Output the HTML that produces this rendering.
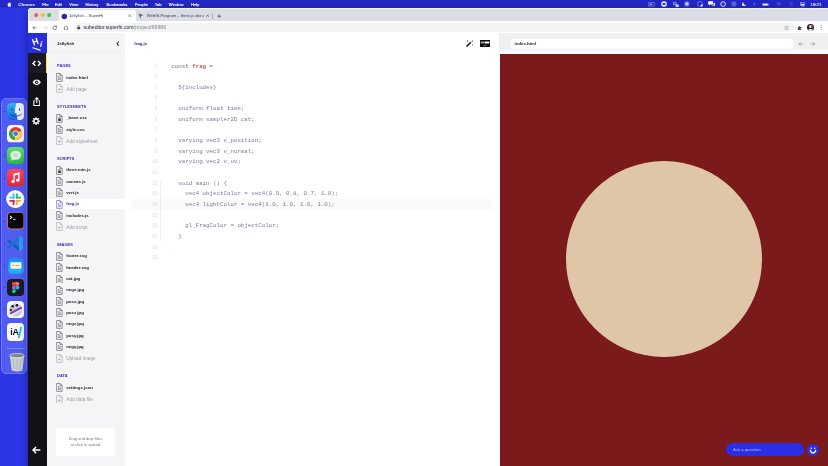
<!DOCTYPE html>
<html lang="en">
<head>
<meta charset="utf-8">
<title>Jellyfish – SuperHi</title>
<style>
*{box-sizing:border-box;margin:0;padding:0}
html,body{width:828px;height:466px;overflow:hidden;background:#2c36e6}
body{position:relative;font-family:"Liberation Sans",sans-serif;color:#111;-webkit-font-smoothing:antialiased}
#root{position:absolute;left:0;top:0;width:828px;height:466px;will-change:transform;overflow:hidden}
.abs{position:absolute}
.t{position:absolute;white-space:nowrap;line-height:1;transform:translateY(-50%)}

/* ---------- macOS menu bar ---------- */
#menubar{position:absolute;left:0;top:0;width:828px;height:7.400px;background:#2328c6;box-shadow:0 0 1px #15157a}
#menubar .m{position:absolute;top:4.600px;transform:translateY(-50%);color:#fff;font-size:4.150px;line-height:1;white-space:nowrap;-webkit-text-stroke:.14px #fff}
#menubar .ic{position:absolute;top:1.6px;height:4.8px;opacity:.95}

/* ---------- dock ---------- */
#dock{position:absolute;left:1px;top:98.400px;width:26px;height:276px;border-radius:5px;background:#505df0;border:.5px solid #6f7af4}
.di{position:absolute;left:4.900px;width:17.300px;height:17.300px;border-radius:4px;overflow:hidden;margin-top:-.65px}
.dot{position:absolute;left:1.600px;width:1px;height:1px;border-radius:50%;background:#1a1f8a}

/* ---------- chrome window ---------- */
#win{position:absolute;left:28px;top:7.800px;width:800px;height:458.200px;background:#fff;border-top-left-radius:3.500px;overflow:hidden;box-shadow:0 2px 9px rgba(0,0,20,.42)}
#tabstrip{position:absolute;left:0;top:0;width:800px;height:13.600px;background:linear-gradient(#e6e8ee 0,#dadde5 1.200px,#dadde5 12.600px,#d4d7de 13.600px)}
#tab1{position:absolute;left:30.500px;top:1.800px;width:77.500px;height:11.800px;background:#fff;border-radius:2.6px 2.6px 0 0}
#toolbar{position:absolute;left:0;top:13.600px;width:800px;height:11.900px;background:#fff}
#omni{position:absolute;left:46px;top:1.500px;width:720px;height:9.300px;border-radius:4.600px;background:#f1f3f4}
.tabt{font-size:4.1px;color:#3c4043}

/* ---------- app ---------- */
#app{position:absolute;left:0;top:25.700px;width:800px;height:432.500px;background:#fff}
#rail{position:absolute;left:0;top:0;width:19px;height:432.5px;background:#121216}
#logo{position:absolute;left:0;top:0;width:19px;height:20px;background:#272ddd}
#railact{position:absolute;left:0;top:20px;width:19px;height:19.300px;background:#1a1a23}
#railact:after{content:"";position:absolute;right:0;top:0;width:1.2px;height:100%;background:#ffe24a}
#panel{position:absolute;left:19px;top:0;width:77.5px;height:432.5px;background:#f5f5f8}
#panelhead{position:absolute;left:0;top:0;width:77.5px;height:20px;border-bottom:.5px solid #efeff3}
.sec{position:absolute;left:9.800px;margin-top:.5px;font-size:4.200px;font-weight:bold;letter-spacing:.1px;color:#352ca6;line-height:1;transform:translateY(-50%) scaleX(.93);transform-origin:0 50%;white-space:nowrap}
.row{position:absolute;left:0;width:77.5px;height:11.33px}
.row svg{position:absolute;left:9.200px;top:1.2px;width:6.8px;height:8.9px}
.row span{position:absolute;left:19.200px;top:50%;margin-top:.2px;transform:translateY(-50%);font-size:4.350px;font-weight:bold;color:#1d1d26;line-height:1;white-space:nowrap}
.row.add span{font-weight:normal;color:#9a9aa6;font-size:4.800px;margin-top:1px}
.row.add svg{opacity:.5}
.row.sel{background:#fff;width:82px;height:9.700px;margin-top:.8px}
.row.sel svg{top:.4px}
.row.sel svg path{stroke:#3b31b4}
.row.sel span{color:#3b31b4}
#drop{position:absolute;left:9.100px;top:394.200px;width:58.500px;height:28.100px;background:#fff;border-radius:1px;text-align:center;font-size:3.800px;line-height:5.800px;color:#73737f;padding-top:9.300px;letter-spacing:.05px}

#editor{position:absolute;left:96.5px;top:0;width:375.5px;height:432.5px;background:#fff}
#code{position:absolute;left:0;top:27.800px;width:375px;font-family:"Liberation Mono",monospace;font-size:5.805px;line-height:10.667px;color:#7a7a9f;white-space:pre}
#code .ln{position:absolute;left:0;width:33px;text-align:right;color:#d9d9e1;font-size:4.700px}
#code .l{position:absolute;left:46.8px;height:10.667px}
#code .act{position:absolute;left:6.500px;width:360.900px;height:10.700px;background:#fafafb;margin-top:-1.050px}
.kw{color:#6c6c74}
.def{color:#c4544d;font-weight:bold}

#preview{position:absolute;left:472px;top:0;width:328px;height:432.5px;background:#7b1a1b}
#pvhead{position:absolute;left:-.6px;top:0;width:328.600px;height:20.200px;background:linear-gradient(#f0f0f2 0,#f0f0f2 15.800px,#fafafb 18.200px,#fff 20.200px)}
#pvurl{position:absolute;left:10.900px;top:5.900px;width:283.800px;height:9.200px;border-radius:4.600px;background:#fff}
#sun{position:absolute;left:66.200px;top:128px;width:195.700px;height:195.700px;border-radius:50%;background:#dfc6a8}
#ask{position:absolute;left:226.3px;top:409.8px;width:77.5px;height:12.9px;border-radius:6.5px;background:#2a2fe6}
#smile{position:absolute;left:306.6px;top:410.3px;width:12px;height:12px;border-radius:50%;background:#2a2fe6}
</style>
</head>
<body>
<div id="root">

<!-- macOS menu bar -->
<div id="menubar">
  <svg class="abs" style="left:6.800px;top:1.500px;width:4.500px;height:5.300px" viewBox="0 0 44 52"><path fill="#fff" d="M31 0c.3 3-1 6-2.700 8-1.800 2-4.600 3.600-7.300 3.400-.4-2.900 1-5.900 2.700-7.700C25.500 1.600 28.600.1 31 0zM40 18c-1 .6-5 3-5 8.500 0 6.400 5.600 8.600 5.800 8.700 0 .2-.9 3-3 6-1.800 2.600-3.700 5.200-6.600 5.200s-3.600-1.700-6.900-1.700c-3.200 0-4.400 1.800-7 1.800s-4.500-2.400-6.600-5.400C8 37.400 6 31.700 6 26.300c0-8.700 5.600-13.300 11.200-13.300 2.900 0 5.400 2 7.200 2s4.500-2.100 7.900-2.100c1.300 0 5.900.1 8.900 4.400z"/></svg>
  <span class="m" style="left:18.300px;font-weight:bold;font-size:4.400px;-webkit-text-stroke:0">Chrome</span>
  <span class="m" style="left:41.9px">File</span>
  <span class="m" style="left:54.8px">Edit</span>
  <span class="m" style="left:69.3px">View</span>
  <span class="m" style="left:85.5px">History</span>
  <span class="m" style="left:106.6px">Bookmarks</span>
  <span class="m" style="left:134.8px">People</span>
  <span class="m" style="left:154.8px">Tab</span>
  <span class="m" style="left:168.8px">Window</span>
  <span class="m" style="left:190.9px">Help</span>
  <span class="m" style="left:810.600px;font-weight:normal;font-size:4.300px;opacity:.95">19:21</span>
  <!-- status icons -->
  <svg class="abs" style="left:648px;top:1.800px;width:7px;height:4.800px" viewBox="0 0 28 19"><rect x="1.500" y="2.500" width="25" height="14" rx="2" fill="none" stroke="#aab0f2" stroke-width="2.200"/><rect x="7" y="6.500" width="9" height="6" fill="#aab0f2"/></svg>
  <svg class="abs" style="left:660.600px;top:1.200px;width:6px;height:6px" viewBox="0 0 20 20"><circle cx="10" cy="10" r="9.500" fill="#eef0ff"/><rect x="5.500" y="7" width="9" height="6" rx="1" fill="#2a2fb4"/></svg>
  <svg class="abs" style="left:673px;top:1.600px;width:6px;height:5.400px" viewBox="0 0 20 18"><rect x="1" y="1" width="9" height="8" rx="1" fill="none" stroke="#e8eaff" stroke-width="2.200"/><rect x="9" y="8" width="10" height="9" rx="1" fill="#e8eaff"/></svg>
  <svg class="abs" style="left:684.400px;top:1.300px;width:5.800px;height:5.800px" viewBox="0 0 20 20"><circle cx="10" cy="10" r="9" fill="#8088e8"/><circle cx="10" cy="10" r="4" fill="#e8eaff"/></svg>
  <svg class="abs" style="left:696.600px;top:1.200px;width:6.400px;height:6.200px" viewBox="0 0 22 21"><circle cx="10" cy="10" r="8.500" fill="none" stroke="#8d95ee" stroke-width="2.600"/><circle cx="16.500" cy="15.500" r="4" fill="#fff"/></svg>
  <svg class="abs" style="left:708.400px;top:1.400px;width:7.200px;height:5.800px" viewBox="0 0 25 20"><path d="M2 1h14a1.500 1.500 0 0 1 1.500 1.500V11a1.500 1.500 0 0 1-1.500 1.500H8L4 16v-3.500H2A1.500 1.500 0 0 1 .5 11V2.500A1.500 1.500 0 0 1 2 1z" fill="#fff"/><path d="M19.500 6H23a1.500 1.500 0 0 1 1.500 1.500v7A1.500 1.500 0 0 1 23 16h-1v3l-4-3h-6v-2h7.500z" fill="#fff"/></svg>
  <svg class="abs" style="left:720.200px;top:1.100px;width:6.200px;height:6.200px" viewBox="0 0 20 20"><circle cx="10" cy="10" r="7.500" fill="none" stroke="#fff" stroke-width="3"/></svg>
  <svg class="abs" style="left:730.800px;top:1.300px;width:5.800px;height:5.800px" viewBox="0 0 20 20"><circle cx="10" cy="10" r="9" fill="#5a62dc"/></svg>
  <svg class="abs" style="left:742.400px;top:2px;width:4.200px;height:4.400px" viewBox="0 0 20 20"><path d="M8 1a9.500 9.500 0 1 0 11 11A8 8 0 0 1 8 1z" fill="#fff"/></svg>
  <svg class="abs" style="left:753.200px;top:1.800px;width:2.600px;height:4.800px" viewBox="0 0 10 20"><path d="M1.500 5.500l7 9L5 18V2l3.500 3.500-7 9" fill="none" stroke="#7078e4" stroke-width="1.800"/></svg>
  <svg class="abs" style="left:762.400px;top:2.600px;width:7.400px;height:3.400px" viewBox="0 0 42 20"><rect x="1.500" y="1.500" width="35" height="17" rx="4.500" fill="none" stroke="#c5c9fa" stroke-width="2.400"/><rect x="5" y="5" width="28" height="10" rx="2" fill="#fff"/><rect x="38.500" y="6.500" width="3" height="7" rx="1.500" fill="#c5c9fa"/></svg>
  <svg class="abs" style="left:776.400px;top:2.200px;width:5.600px;height:4.200px" viewBox="0 0 24 18"><path d="M1 6a16 16 0 0 1 22 0l-2.400 2.600a12.500 12.500 0 0 0-17.200 0zM5.500 10.700a9.500 9.500 0 0 1 13 0L16 13.400a6 6 0 0 0-8 0zM9.700 15.200a3.400 3.400 0 0 1 4.600 0L12 17.800z" fill="#5f68e2"/></svg>
  <svg class="abs" style="left:788.700px;top:1.900px;width:4.800px;height:4.800px" viewBox="0 0 20 20"><circle cx="10" cy="10" r="8" fill="none" stroke="#5f68e2" stroke-width="2"/><path d="M10 5v5.500l3.500 2" fill="none" stroke="#5f68e2" stroke-width="2"/></svg>
  <svg class="abs" style="left:799.600px;top:2px;width:5.400px;height:4.500px" viewBox="0 0 24 20"><rect x="1.500" y="1.500" width="21" height="15" rx="2" fill="none" stroke="#e8eaff" stroke-width="2.400"/><rect x="4" y="8" width="16" height="6.500" fill="#e8eaff"/><rect x="8" y="17.500" width="8" height="2" fill="#e8eaff"/></svg>
</div>

<!-- dock -->
<div id="dock">
  <i class="dot" style="top:11.400px"></i><i class="dot" style="top:34px"></i><i class="dot" style="top:56px"></i><i class="dot" style="top:78.500px"></i><i class="dot" style="top:100px"></i><i class="dot" style="top:122px"></i><i class="dot" style="top:144px"></i><i class="dot" style="top:166px"></i><i class="dot" style="top:188px"></i><i class="dot" style="top:210px"></i><i class="dot" style="top:232px"></i>
  <!-- Finder -->
  <svg class="di" style="top:4.200px" viewBox="0 0 40 40"><defs><linearGradient id="fb" x1="0" y1="0" x2="0" y2="1"><stop offset="0" stop-color="#35b4f8"/><stop offset="1" stop-color="#1762dd"/></linearGradient></defs><rect width="40" height="40" rx="9" fill="url(#fb)"/><path d="M22 0h9a9 9 0 0 1 9 9v22a9 9 0 0 1-9 9h-6c-2-6-3-11-3-17h-4c0-9 2-17 4-23z" fill="#eaeef6"/><path d="M11 13v4M29 13v4" stroke="#14285a" stroke-width="2" stroke-linecap="round"/><path d="M8 26c7 6 18 6 25 0" stroke="#14285a" stroke-width="1.800" fill="none" stroke-linecap="round"/></svg>
  <!-- Chrome -->
  <svg class="di" style="top:26.500px" viewBox="0 0 40 40"><rect width="40" height="40" rx="9" fill="#f6f6f6"/><circle cx="20" cy="20" r="15" fill="#e33b2e"/><path d="M20 20L7 12.500A15 15 0 0 0 17.500 34.800z" fill="#2da94f"/><path d="M20 20l-2.500 14.800A15 15 0 0 0 33 12.500z" fill="#fdd03b"/><path d="M20 12.500h13A15 15 0 0 0 7 12.500z" fill="#e33b2e"/><circle cx="20" cy="20" r="7" fill="#f6f6f6"/><circle cx="20" cy="20" r="5.500" fill="#3f7fe8"/></svg>
  <!-- Messages -->
  <svg class="di" style="top:48.400px" viewBox="0 0 40 40"><defs><linearGradient id="mg" x1="0" y1="0" x2="0" y2="1"><stop offset="0" stop-color="#5fe36f"/><stop offset="1" stop-color="#22b845"/></linearGradient></defs><rect width="40" height="40" rx="9" fill="url(#mg)"/><ellipse cx="20" cy="19" rx="12.500" ry="10.500" fill="#dff3e0"/><path d="M11 26l-2 6 7-3z" fill="#dff3e0"/><ellipse cx="20" cy="19" rx="6" ry="5" fill="#c4cfc6" opacity=".7"/></svg>
  <!-- Music -->
  <svg class="di" style="top:70.600px" viewBox="0 0 40 40"><defs><linearGradient id="mu" x1="0" y1="0" x2="0" y2="1"><stop offset="0" stop-color="#fb4a63"/><stop offset="1" stop-color="#e3223c"/></linearGradient></defs><rect width="40" height="40" rx="9" fill="url(#mu)"/><path d="M15 11l14-3.500v18.500a4 3.500 0 1 1-3-3.400V13l-8 2v14a4 3.500 0 1 1-3-3.400z" fill="#fff"/></svg>
  <!-- Slack -->
  <svg class="di" style="top:91.200px;left:4.400px;width:18.400px;height:18.400px;border-radius:50%" viewBox="0 0 40 40"><circle cx="20" cy="20" r="20" fill="#fbfbfd"/><g stroke-width="4" stroke-linecap="round"><path d="M16.500 9v8" stroke="#36c5f0"/><path d="M9 16.500h8" stroke="#36c5f0"/><path d="M23.500 9v8" stroke="#2eb67d"/><path d="M23 16.500h8" stroke="#2eb67d"/><path d="M16.500 23v8" stroke="#e01e5a"/><path d="M9 23.500h8" stroke="#e01e5a"/><path d="M23.500 23v8" stroke="#ecb22e"/><path d="M23 23.500h8" stroke="#ecb22e"/></g></svg>
  <!-- Terminal -->
  <svg class="di" style="top:113.600px" viewBox="0 0 40 40"><rect x=".8" y=".8" width="38.400" height="38.400" rx="8" fill="#0b0709" stroke="#d86a9c" stroke-width="2.400"/><path d="M7 9l4 3.500L7 16" stroke="#fff" stroke-width="2.400" fill="none"/><path d="M14 17h6" stroke="#ddd" stroke-width="2"/></svg>
  <!-- VS Code -->
  <svg class="di" style="top:135.900px;left:3.700px;width:18.200px;height:17.600px;border-radius:0;overflow:visible" viewBox="0 0 40 40"><path d="M1.500 13.500L5.500 9.500 31 29l-1 9z" fill="#1462b4"/><path d="M1.500 26.500L5.500 30.500 31 11l-1-9z" fill="#1a74cc"/><path d="M29 2l9 4.500v27L29 38z" fill="#2a9df0"/></svg>
  <!-- Mimestream / mail -->
  <svg class="di" style="top:159px;left:6px;width:15.800px;height:15.800px" viewBox="0 0 40 40"><defs><linearGradient id="ml" x1="0" y1="0" x2="0" y2="1"><stop offset="0" stop-color="#1a8cf0"/><stop offset="1" stop-color="#19b2f6"/></linearGradient></defs><rect width="40" height="40" rx="9" fill="url(#ml)"/><rect x="6" y="11" width="28" height="16" rx="1.500" fill="#f8f6ef"/><path d="M11 19h6M20 19h9" stroke="#e8a23c" stroke-width="3"/><path d="M6 31h28" stroke="#57c6fa" stroke-width="1.500"/></svg>
  <!-- Figma -->
  <svg class="di" style="top:179.800px" viewBox="0 0 40 40"><rect width="40" height="40" rx="9" fill="#1b1b29"/><path d="M20 7h-4.300a4.300 4.300 0 0 0 0 8.600H20z" fill="#f24e1e"/><path d="M20 7h4.300a4.300 4.300 0 0 1 0 8.600H20z" fill="#ff7262"/><path d="M20 15.600h-4.300a4.300 4.300 0 0 0 0 8.600H20z" fill="#a259ff"/><circle cx="24.300" cy="19.900" r="4.300" fill="#1abcfe"/><path d="M20 24.200h-4.300a4.300 4.300 0 1 0 4.300 4.300z" fill="#0acf83"/></svg>
  <!-- palette app -->
  <svg class="di" style="top:202.300px" viewBox="0 0 40 40"><rect width="40" height="40" rx="9" fill="#fafafc"/><circle cx="20" cy="21" r="15" fill="#c9c6cf"/><path d="M6 27L33 13l2 5L9 32z" fill="#7b3fb6"/><path d="M8 31l26-13 1 4L11 35z" fill="#e8e4ee"/><circle cx="13" cy="12" r="3" fill="#17171c"/><circle cx="23" cy="10" r="3" fill="#17171c"/><circle cx="9" cy="21" r="2.500" fill="#17171c"/></svg>
  <!-- iA Writer -->
  <div class="di" style="top:224.500px;background:#fbfbfd"><span class="abs" style="left:3.300px;top:4.600px;font-size:9px;line-height:1;font-weight:bold;color:#111;letter-spacing:-.3px">iA</span><i class="abs" style="left:12.600px;top:3.500px;width:1.500px;height:10.500px;background:#22c7e8;transform:skewX(-12deg)"></i></div>
  <i class="abs" style="left:4.600px;top:248.200px;width:18.400px;height:.5px;background:#7b86f4"></i>
  <!-- Trash -->
  <svg class="di" style="top:254.600px;left:6.600px;width:16px;height:18.600px;border-radius:0" viewBox="0 0 32 37"><ellipse cx="16" cy="5" rx="14.500" ry="4.500" fill="#7d8a86"/><path d="M1.500 5L5 33.500c.5 2 5 3.300 11 3.300s10.500-1.300 11-3.300L30.500 5c-2 2.500-8 3.800-14.500 3.800S3.500 7.500 1.500 5z" fill="#c9cdd4"/><path d="M9 12l1.500 20M16 12.500v20.500M23 12l-1.500 20" stroke="#b0b4bd" stroke-width="1.600"/><ellipse cx="16" cy="5" rx="14.500" ry="4.500" fill="none" stroke="#e4e7ee" stroke-width="1.400"/></svg>
</div>

<!-- chrome window -->
<div id="win">
  <div id="tabstrip">
    <svg class="abs" style="left:4px;top:3px;width:22px;height:8px" viewBox="0 0 22 8"><circle cx="4.200" cy="4.100" r="2.050" fill="#ee5f57"/><circle cx="10.700" cy="4.100" r="2.050" fill="#f5bd2f"/><circle cx="17.200" cy="4.100" r="2.050" fill="#3ec544"/></svg>
    <div id="tab1">
      <svg class="abs" style="left:2px;top:3px;width:7px;height:7px" viewBox="0 0 7 7"><circle cx="3.300" cy="3.400" r="2.750" fill="#2d2aa5"/></svg>
      <span class="t tabt" style="left:10.8px;top:6.5px">Jellyfish – SuperHi</span>
      <svg class="abs" style="left:69.6px;top:4.7px;width:3.4px;height:3.4px" viewBox="0 0 10 10"><path d="M1.500 1.500l7 7M8.500 1.500l-7 7" stroke="#45484d" stroke-width="1.600" fill="none"/></svg>
    </div>
    <svg class="abs" style="left:109.600px;top:5.200px;width:5.800px;height:5.800px" viewBox="0 0 20 20"><path d="M1 2l18 5-9 3.500L8.500 19z" fill="#4a4d52"/><path d="M1 2l9 8.500" stroke="#dee1e6" stroke-width="1.200"/></svg>
    <span class="t tabt" style="left:118.700px;top:8.300px">WebGLProgram – three.js docs</span>
    <svg class="abs" style="left:177.500px;top:6.500px;width:3.400px;height:3.400px" viewBox="0 0 10 10"><path d="M1.500 1.500l7 7M8.500 1.500l-7 7" stroke="#45484d" stroke-width="1.600" fill="none"/></svg>
    <i class="abs" style="left:184.400px;top:5.200px;width:.5px;height:6px;background:#aeb2b8"></i>
    <svg class="abs" style="left:189.400px;top:5.800px;width:4.400px;height:4.400px" viewBox="0 0 10 10"><path d="M5 .8v8.400M.8 5h8.400" stroke="#3c4043" stroke-width="1.500" fill="none"/></svg>
  </div>
  <i class="abs" style="left:0;top:0;width:1.100px;height:14px;background:linear-gradient(#fff,rgba(255,255,255,.8));opacity:.85;border-top-left-radius:3px"></i><i class="abs" style="left:0;top:0;width:800px;height:.9px;background:#f3f4f8;opacity:.9"></i>
  <div id="toolbar">
    <svg class="abs" style="left:3.600px;top:3.400px;width:5.400px;height:5.400px" viewBox="0 0 20 20"><path d="M17 10H4M9.500 4L3.500 10l6 6" stroke="#45484d" stroke-width="2.300" fill="none"/></svg>
    <svg class="abs" style="left:14.600px;top:3.400px;width:5.400px;height:5.400px" viewBox="0 0 20 20"><path d="M3 10h13M10.500 4l6 6-6 6" stroke="#c6c9ce" stroke-width="2.300" fill="none"/></svg>
    <svg class="abs" style="left:24.300px;top:3.300px;width:5.600px;height:5.600px" viewBox="0 0 20 20"><path d="M16.500 10a6.500 6.500 0 1 1-2-4.700" stroke="#45484d" stroke-width="2.300" fill="none"/><path d="M17.500 1.500v6.500h-6.500z" fill="#45484d"/></svg>
    <svg class="abs" style="left:34.700px;top:3.200px;width:5.800px;height:5.800px" viewBox="0 0 20 20"><path d="M3 9.500L10 3l7 6.500M5 8.500V17h10V8.500" stroke="#45484d" stroke-width="2.200" fill="none"/></svg>
    <div id="omni">
      <svg class="abs" style="left:3.400px;top:2.200px;width:3.400px;height:4.600px" viewBox="0 0 12 16"><rect x="1" y="7" width="10" height="8" rx="1.500" fill="#45484d"/><path d="M3.300 7V4.500a2.700 2.700 0 0 1 5.400 0V7" stroke="#45484d" stroke-width="1.700" fill="none"/></svg>
      <span class="t" style="left:9.600px;top:5.400px;font-size:5.120px;color:#202124">subeditor.superhi.com<span style="color:#80868b">/project/69986</span></span>
      <svg class="abs" style="left:710.400px;top:2px;width:5.200px;height:5.200px" viewBox="0 0 20 20"><path d="M10 2l2.500 5.300 5.700.7-4.200 4 1.100 5.700L10 14.900 4.900 17.700 6 12 1.800 8l5.700-.7z" stroke="#80848a" stroke-width="1.700" fill="none"/></svg>
    </div>
    <svg class="abs" style="left:768.600px;top:3.300px;width:5.600px;height:5.600px" viewBox="0 0 20 20"><path d="M3 7h4V5.500a2 2 0 1 1 4 0V7h5v4h-1.500a2 2 0 1 0 0 4H16v3H3z" fill="#45484d"/></svg>
    <div class="abs" style="left:779.200px;top:2.500px;width:6.800px;height:6.800px;border-radius:50%;background:#2a2630;overflow:hidden"><i class="abs" style="left:2.100px;top:1.500px;width:2.800px;height:3px;border-radius:50%;background:#e9c9c0"></i><i class="abs" style="left:3.600px;top:.6px;width:3px;height:3.400px;border-radius:50%;background:#a33b55;opacity:.8"></i><i class="abs" style="left:1.200px;top:4.700px;width:4.600px;height:3px;border-radius:50%;background:#f1f1f1"></i></div>
    <svg class="abs" style="left:791.600px;top:3px;width:2.400px;height:6.400px" viewBox="0 0 6 16"><circle cx="3" cy="3" r="1.350" fill="#5f6368"/><circle cx="3" cy="8" r="1.350" fill="#5f6368"/><circle cx="3" cy="13" r="1.350" fill="#5f6368"/></svg>
  </div>

  <div id="app">
    <div id="rail">
      <div id="logo">
        <span class="abs" style="left:4px;top:3.800px;font-size:9.400px;line-height:1;font-weight:bold;color:#fff;transform:rotate(-20deg) scaleX(.92)">H</span>
        <span class="abs" style="left:12.200px;top:6.400px;font-size:8.400px;line-height:1;font-weight:bold;color:#fff;transform:rotate(12deg)">i</span>
        <svg class="abs" style="left:3.600px;top:13.600px;width:9.600px;height:4px" viewBox="0 0 20 8"><path d="M1.500 1.500L17 6.300" stroke="#fff" stroke-width="2.300" stroke-linecap="round"/></svg>
      </div>
      <div id="railact"></div>
      <svg class="abs" style="left:3.600px;top:26.200px;width:9.400px;height:6.800px" viewBox="0 0 28 20"><path d="M10 3L3 10l7 7M18 3l7 7-7 7" stroke="#fff" stroke-width="4.200" fill="none" stroke-linejoin="miter"/></svg>
      <svg class="abs" style="left:3.600px;top:45.700px;width:9.400px;height:6.600px" viewBox="0 0 28 20"><path d="M1.500 10C5 4 9 1.800 14 1.800S23 4 26.500 10C23 16 19 18.200 14 18.200S5 16 1.500 10z" fill="#fff"/><circle cx="14" cy="10" r="5.200" fill="#121216"/><circle cx="14" cy="10" r="2.400" fill="#fff"/></svg>
      <svg class="abs" style="left:4.700px;top:63.500px;width:7.600px;height:9.400px" viewBox="0 0 22 29" preserveAspectRatio="none"><path d="M7 12H2.500v14.500h17V12H15" stroke="#fff" stroke-width="3" fill="none"/><path d="M11 19V3M6 7.500l5-5 5 5" stroke="#fff" stroke-width="3" fill="none"/></svg>
      <svg class="abs" style="left:4.400px;top:83.400px;width:8.200px;height:8.200px" viewBox="0 0 24 24"><g fill="#fff"><circle cx="12" cy="12" r="8"/><rect x="10" y="0.500" width="4" height="23" rx="1"/><rect x="10" y="0.500" width="4" height="23" rx="1" transform="rotate(45 12 12)"/><rect x="10" y="0.500" width="4" height="23" rx="1" transform="rotate(90 12 12)"/><rect x="10" y="0.500" width="4" height="23" rx="1" transform="rotate(135 12 12)"/></g><circle cx="12" cy="12" r="4.300" fill="#121216"/></svg>
      <svg class="abs" style="left:4.300px;top:412.200px;width:9px;height:8.200px" viewBox="0 0 22 20"><path d="M20.500 10H4M10 2.500L2.500 10l7.500 7.500" stroke="#fff" stroke-width="3.600" fill="none"/></svg>
    </div>
    <div id="panel"><div id="panelhead">
        <span class="t" style="left:10px;top:10.300px;font-size:4.300px;font-weight:bold;color:#15151c">Jellyfish</span>
        <svg class="abs" style="left:68.500px;top:7.600px;width:3.800px;height:5.400px" viewBox="0 0 10 14"><path d="M8 1.500L2.500 7 8 12.500" stroke="#2a2a32" stroke-width="2.700" fill="none"/></svg>
      </div>
      <div class="sec" style="top:32.40px">PAGES</div>
      <div class="row " style="top:38.33px"><svg viewBox="0 0 20 26"><path d="M2 1.500h10l6 6V24.500H2z" fill="none" stroke="#3a3a44" stroke-width="1.600" stroke-linejoin="round"/><path d="M12 1.500v6h6" fill="none" stroke="#3a3a44" stroke-width="1.500"/><path d="M6 14.500h8M6 18.500h8" stroke="#33333c" stroke-width="1.700"/><path d="M6 10.500h4" stroke="#33333c" stroke-width="1.700"/></svg><span>index.html</span></div>
      <div class="row add" style="top:49.66px"><svg viewBox="0 0 20 26"><path d="M2 1.500h10l6 6V24.500H2z" fill="none" stroke="#3a3a44" stroke-width="1.600" stroke-linejoin="round"/><path d="M12 1.500v6h6" fill="none" stroke="#3a3a44" stroke-width="1.500"/><path d="M10 12.500v7M6.500 16h7" stroke="#33333c" stroke-width="1.800"/></svg><span>Add page</span></div>
      <div class="sec" style="top:72.83px">STYLESHEETS</div>
      <div class="row " style="top:79.06px"><svg viewBox="0 0 20 26"><path d="M2 1.500h10l6 6V24.500H2z" fill="none" stroke="#3a3a44" stroke-width="1.600" stroke-linejoin="round"/><path d="M12 1.500v6h6" fill="none" stroke="#3a3a44" stroke-width="1.500"/><rect x="6.500" y="13.500" width="7.500" height="7" fill="#33333c"/><path d="M8 13.500v-2a2.200 2.200 0 0 1 4.400 0v2" stroke="#33333c" stroke-width="1.500" fill="none"/></svg><span>_base.css</span></div>
      <div class="row " style="top:90.39px"><svg viewBox="0 0 20 26"><path d="M2 1.500h10l6 6V24.500H2z" fill="none" stroke="#3a3a44" stroke-width="1.600" stroke-linejoin="round"/><path d="M12 1.500v6h6" fill="none" stroke="#3a3a44" stroke-width="1.500"/><path d="M6 14.500h8M6 18.500h8" stroke="#33333c" stroke-width="1.700"/><path d="M6 10.500h4" stroke="#33333c" stroke-width="1.700"/></svg><span>style.css</span></div>
      <div class="row add" style="top:101.72px"><svg viewBox="0 0 20 26"><path d="M2 1.500h10l6 6V24.500H2z" fill="none" stroke="#3a3a44" stroke-width="1.600" stroke-linejoin="round"/><path d="M12 1.500v6h6" fill="none" stroke="#3a3a44" stroke-width="1.500"/><path d="M10 12.500v7M6.500 16h7" stroke="#33333c" stroke-width="1.800"/></svg><span>Add stylesheet</span></div>
      <div class="sec" style="top:124.89px">SCRIPTS</div>
      <div class="row " style="top:131.12px"><svg viewBox="0 0 20 26"><path d="M2 1.500h10l6 6V24.500H2z" fill="none" stroke="#3a3a44" stroke-width="1.600" stroke-linejoin="round"/><path d="M12 1.500v6h6" fill="none" stroke="#3a3a44" stroke-width="1.500"/><rect x="6.500" y="13.500" width="7.500" height="7" fill="#33333c"/><path d="M8 13.500v-2a2.200 2.200 0 0 1 4.400 0v2" stroke="#33333c" stroke-width="1.500" fill="none"/></svg><span>three.min.js</span></div>
      <div class="row " style="top:142.45px"><svg viewBox="0 0 20 26"><path d="M2 1.500h10l6 6V24.500H2z" fill="none" stroke="#3a3a44" stroke-width="1.600" stroke-linejoin="round"/><path d="M12 1.500v6h6" fill="none" stroke="#3a3a44" stroke-width="1.500"/><path d="M6 14.500h8M6 18.500h8" stroke="#33333c" stroke-width="1.700"/><path d="M6 10.500h4" stroke="#33333c" stroke-width="1.700"/></svg><span>canvas.js</span></div>
      <div class="row " style="top:153.78px"><svg viewBox="0 0 20 26"><path d="M2 1.500h10l6 6V24.500H2z" fill="none" stroke="#3a3a44" stroke-width="1.600" stroke-linejoin="round"/><path d="M12 1.500v6h6" fill="none" stroke="#3a3a44" stroke-width="1.500"/><path d="M6 14.500h8M6 18.500h8" stroke="#33333c" stroke-width="1.700"/><path d="M6 10.500h4" stroke="#33333c" stroke-width="1.700"/></svg><span>vert.js</span></div>
      <div class="row sel" style="top:165.11px"><svg viewBox="0 0 20 26"><path d="M2 1.500h10l6 6V24.500H2z" fill="none" stroke="#3a3a44" stroke-width="1.600" stroke-linejoin="round"/><path d="M12 1.500v6h6" fill="none" stroke="#3a3a44" stroke-width="1.500"/><path d="M6 14.500h8M6 18.500h8" stroke="#33333c" stroke-width="1.700"/><path d="M6 10.500h4" stroke="#33333c" stroke-width="1.700"/></svg><span>frag.js</span></div>
      <div class="row " style="top:176.44px"><svg viewBox="0 0 20 26"><path d="M2 1.500h10l6 6V24.500H2z" fill="none" stroke="#3a3a44" stroke-width="1.600" stroke-linejoin="round"/><path d="M12 1.500v6h6" fill="none" stroke="#3a3a44" stroke-width="1.500"/><path d="M6 14.500h8M6 18.500h8" stroke="#33333c" stroke-width="1.700"/><path d="M6 10.500h4" stroke="#33333c" stroke-width="1.700"/></svg><span>includes.js</span></div>
      <div class="row add" style="top:187.77px"><svg viewBox="0 0 20 26"><path d="M2 1.500h10l6 6V24.500H2z" fill="none" stroke="#3a3a44" stroke-width="1.600" stroke-linejoin="round"/><path d="M12 1.500v6h6" fill="none" stroke="#3a3a44" stroke-width="1.500"/><path d="M10 12.500v7M6.500 16h7" stroke="#33333c" stroke-width="1.800"/></svg><span>Add script</span></div>
      <div class="sec" style="top:210.94px">IMAGES</div>
      <div class="row " style="top:217.17px"><svg viewBox="0 0 20 26"><path d="M2 1.500h10l6 6V24.500H2z" fill="none" stroke="#3a3a44" stroke-width="1.600" stroke-linejoin="round"/><path d="M12 1.500v6h6" fill="none" stroke="#3a3a44" stroke-width="1.500"/><path d="M6 14.500h8M6 18.500h8" stroke="#33333c" stroke-width="1.700"/><path d="M6 10.500h4" stroke="#33333c" stroke-width="1.700"/></svg><span>footer.svg</span></div>
      <div class="row " style="top:228.50px"><svg viewBox="0 0 20 26"><path d="M2 1.500h10l6 6V24.500H2z" fill="none" stroke="#3a3a44" stroke-width="1.600" stroke-linejoin="round"/><path d="M12 1.500v6h6" fill="none" stroke="#3a3a44" stroke-width="1.500"/><path d="M6 14.500h8M6 18.500h8" stroke="#33333c" stroke-width="1.700"/><path d="M6 10.500h4" stroke="#33333c" stroke-width="1.700"/></svg><span>header.svg</span></div>
      <div class="row " style="top:239.83px"><svg viewBox="0 0 20 26"><path d="M2 1.500h10l6 6V24.500H2z" fill="none" stroke="#3a3a44" stroke-width="1.600" stroke-linejoin="round"/><path d="M12 1.500v6h6" fill="none" stroke="#3a3a44" stroke-width="1.500"/><path d="M6 14.500h8M6 18.500h8" stroke="#33333c" stroke-width="1.700"/><path d="M6 10.500h4" stroke="#33333c" stroke-width="1.700"/></svg><span>cat.jpg</span></div>
      <div class="row " style="top:251.16px"><svg viewBox="0 0 20 26"><path d="M2 1.500h10l6 6V24.500H2z" fill="none" stroke="#3a3a44" stroke-width="1.600" stroke-linejoin="round"/><path d="M12 1.500v6h6" fill="none" stroke="#3a3a44" stroke-width="1.500"/><path d="M6 14.500h8M6 18.500h8" stroke="#33333c" stroke-width="1.700"/><path d="M6 10.500h4" stroke="#33333c" stroke-width="1.700"/></svg><span>negx.jpg</span></div>
      <div class="row " style="top:262.49px"><svg viewBox="0 0 20 26"><path d="M2 1.500h10l6 6V24.500H2z" fill="none" stroke="#3a3a44" stroke-width="1.600" stroke-linejoin="round"/><path d="M12 1.500v6h6" fill="none" stroke="#3a3a44" stroke-width="1.500"/><path d="M6 14.500h8M6 18.500h8" stroke="#33333c" stroke-width="1.700"/><path d="M6 10.500h4" stroke="#33333c" stroke-width="1.700"/></svg><span>posx.jpg</span></div>
      <div class="row " style="top:273.82px"><svg viewBox="0 0 20 26"><path d="M2 1.500h10l6 6V24.500H2z" fill="none" stroke="#3a3a44" stroke-width="1.600" stroke-linejoin="round"/><path d="M12 1.500v6h6" fill="none" stroke="#3a3a44" stroke-width="1.500"/><path d="M6 14.500h8M6 18.500h8" stroke="#33333c" stroke-width="1.700"/><path d="M6 10.500h4" stroke="#33333c" stroke-width="1.700"/></svg><span>posz.jpg</span></div>
      <div class="row " style="top:285.15px"><svg viewBox="0 0 20 26"><path d="M2 1.500h10l6 6V24.500H2z" fill="none" stroke="#3a3a44" stroke-width="1.600" stroke-linejoin="round"/><path d="M12 1.500v6h6" fill="none" stroke="#3a3a44" stroke-width="1.500"/><path d="M6 14.500h8M6 18.500h8" stroke="#33333c" stroke-width="1.700"/><path d="M6 10.500h4" stroke="#33333c" stroke-width="1.700"/></svg><span>negz.jpg</span></div>
      <div class="row " style="top:296.48px"><svg viewBox="0 0 20 26"><path d="M2 1.500h10l6 6V24.500H2z" fill="none" stroke="#3a3a44" stroke-width="1.600" stroke-linejoin="round"/><path d="M12 1.500v6h6" fill="none" stroke="#3a3a44" stroke-width="1.500"/><path d="M6 14.500h8M6 18.500h8" stroke="#33333c" stroke-width="1.700"/><path d="M6 10.500h4" stroke="#33333c" stroke-width="1.700"/></svg><span>posy.jpg</span></div>
      <div class="row " style="top:307.81px"><svg viewBox="0 0 20 26"><path d="M2 1.500h10l6 6V24.500H2z" fill="none" stroke="#3a3a44" stroke-width="1.600" stroke-linejoin="round"/><path d="M12 1.500v6h6" fill="none" stroke="#3a3a44" stroke-width="1.500"/><path d="M6 14.500h8M6 18.500h8" stroke="#33333c" stroke-width="1.700"/><path d="M6 10.500h4" stroke="#33333c" stroke-width="1.700"/></svg><span>negy.jpg</span></div>
      <div class="row add" style="top:319.14px"><svg viewBox="0 0 20 26"><path d="M2 1.500h10l6 6V24.500H2z" fill="none" stroke="#3a3a44" stroke-width="1.600" stroke-linejoin="round"/><path d="M12 1.500v6h6" fill="none" stroke="#3a3a44" stroke-width="1.500"/><path d="M10 12.500v7M6.500 16h7" stroke="#33333c" stroke-width="1.800"/></svg><span>Upload image</span></div>
      <div class="sec" style="top:342.31px">DATA</div>
      <div class="row " style="top:348.54px"><svg viewBox="0 0 20 26"><path d="M2 1.500h10l6 6V24.500H2z" fill="none" stroke="#3a3a44" stroke-width="1.600" stroke-linejoin="round"/><path d="M12 1.500v6h6" fill="none" stroke="#3a3a44" stroke-width="1.500"/><path d="M6 14.500h8M6 18.500h8" stroke="#33333c" stroke-width="1.700"/><path d="M6 10.500h4" stroke="#33333c" stroke-width="1.700"/></svg><span>settings.json</span></div>
      <div class="row add" style="top:359.87px"><svg viewBox="0 0 20 26"><path d="M2 1.500h10l6 6V24.500H2z" fill="none" stroke="#3a3a44" stroke-width="1.600" stroke-linejoin="round"/><path d="M12 1.500v6h6" fill="none" stroke="#3a3a44" stroke-width="1.500"/><path d="M10 12.500v7M6.500 16h7" stroke="#33333c" stroke-width="1.800"/></svg><span>Add data file</span></div>
      <div id="drop">Drag and drop files<br>or click to upload</div>
    </div>
    <div id="editor">
      <span class="t" style="left:9.800px;top:10.300px;font-size:4.300px;font-weight:bold;color:#2f2a9c">frag.js</span>
      <svg class="abs" style="left:341.400px;top:6.400px;width:7.600px;height:7.600px" viewBox="0 0 76 76"><path d="M10 61L44 27" stroke="#0c0c0c" stroke-width="15" stroke-linecap="round"/><path d="M50 21l5-5" stroke="#0c0c0c" stroke-width="7" stroke-linecap="round" opacity=".55"/><rect x="11" y="5" width="12" height="12" fill="#0c0c0c" opacity=".8" transform="rotate(45 17 11)"/><rect x="60" y="5" width="11" height="11" fill="#0c0c0c" opacity=".8" transform="rotate(45 65.500 10.500)"/><rect x="62" y="43" width="11" height="11" fill="#0c0c0c" opacity=".8" transform="rotate(45 67.500 48.500)"/></svg>
      <svg class="abs" style="left:355.500px;top:6.300px;width:10px;height:7px" viewBox="0 0 100 70"><rect width="100" height="70" rx="3" fill="#0c0c0c"/><rect x="6" y="15" width="40" height="20" fill="#9a9a9a"/><rect x="48" y="15" width="46" height="20" fill="#fff"/><rect x="34" y="52" width="34" height="8" fill="#777"/></svg>
      <div id="code"><div class="act" style="top:138.67px"></div><i class="abs" style="left:35.300px;top:119.34px;width:.4px;height:60.00px;background:#ececf1"></i><div class="ln" style="top:0.00px">1</div><div class="l" style="top:0.50px"><span class="kw">const</span> <span class="def">frag</span> <span class="kw">=</span> `</div><div class="ln" style="top:10.67px">2</div><div class="l" style="top:10.67px"></div><div class="ln" style="top:21.33px">3</div><div class="l" style="top:21.33px">  ${includes}</div><div class="ln" style="top:32.00px">4</div><div class="l" style="top:32.00px"></div><div class="ln" style="top:42.67px">5</div><div class="l" style="top:42.67px">  uniform float time;</div><div class="ln" style="top:53.34px">6</div><div class="l" style="top:53.34px">  uniform sampler2D cat;</div><div class="ln" style="top:64.00px">7</div><div class="l" style="top:64.00px"></div><div class="ln" style="top:74.67px">8</div><div class="l" style="top:74.67px">  varying vec3 v_position;</div><div class="ln" style="top:85.34px">9</div><div class="l" style="top:85.34px">  varying vec3 v_normal;</div><div class="ln" style="top:96.00px">10</div><div class="l" style="top:96.00px">  varying vec2 v_uv;</div><div class="ln" style="top:106.67px">11</div><div class="l" style="top:106.67px"></div><div class="ln" style="top:117.34px">12</div><div class="l" style="top:117.34px">  void main () {</div><div class="ln" style="top:128.00px">13</div><div class="l" style="top:128.00px">    vec4 objectColor = vec4(0.9, 0.8, 0.7, 1.0);</div><div class="ln" style="top:138.67px">14</div><div class="l" style="top:138.67px">    vec4 lightColor = vec4(1.0, 1.0, 1.0, 1.0);</div><div class="ln" style="top:149.34px">15</div><div class="l" style="top:149.34px"></div><div class="ln" style="top:160.00px">16</div><div class="l" style="top:160.00px">    gl_FragColor = objectColor;</div><div class="ln" style="top:170.67px">17</div><div class="l" style="top:170.67px">  }</div><div class="ln" style="top:181.34px">18</div><div class="l" style="top:181.34px"></div><div class="ln" style="top:192.01px">19</div><div class="l" style="top:192.01px">`</div></div>
    </div>
    <div id="preview">
      <div id="sun"></div>
      <div id="pvhead"><div id="pvurl"><span class="t" style="left:4.300px;top:4.900px;font-size:4.300px;font-weight:bold;color:#22222a">index.html</span></div>
        <svg class="abs" style="left:298.400px;top:7.300px;width:5.800px;height:5.800px" viewBox="0 0 20 20"><path d="M18 10H4M9.500 3.500L3 10l6.500 6.500" stroke="#a2a2a8" stroke-width="3" fill="none"/></svg>
        <svg class="abs" style="left:311px;top:7.300px;width:5.800px;height:5.800px" viewBox="0 0 20 20"><path d="M2 10h14M10.500 3.500L17 10l-6.500 6.500" stroke="#a2a2a8" stroke-width="3" fill="none"/></svg>
      </div>
      <div id="ask"><span class="t" style="left:6.800px;top:6.800px;font-size:4.200px;color:#b9bdfc">Ask a question</span></div>
      <div id="smile"><svg class="abs" style="left:0;top:0;width:12px;height:12px" viewBox="0 0 24 24"><path d="M6.500 12.500c1 4 4 5.300 5.500 5.300s4.500-1.300 5.500-5.300" stroke="#fff" stroke-width="2.300" fill="none" stroke-linecap="round"/><circle cx="8.500" cy="8.300" r="1.500" fill="#fff"/><circle cx="15.500" cy="8.300" r="1.500" fill="#fff"/></svg></div>
    </div>
  </div>
</div>

</div>
</body>
</html>
